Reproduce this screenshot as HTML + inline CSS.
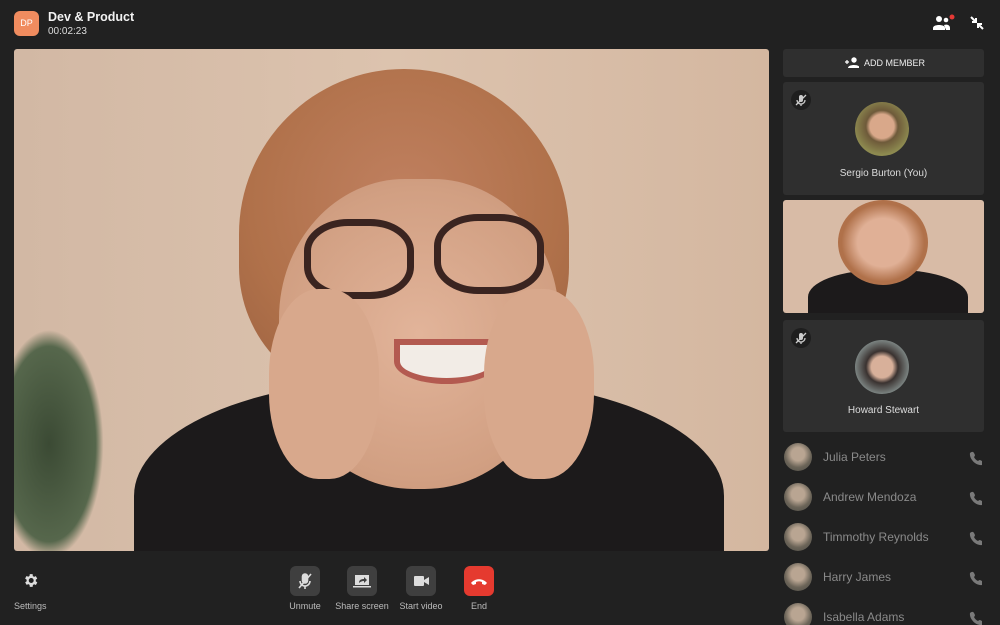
<!DOCTYPE html>
<html><head><style>
*{margin:0;padding:0;box-sizing:border-box}
html,body{width:1000px;height:625px;overflow:hidden}
body{background:#212121;font-family:"Liberation Sans",sans-serif;color:#eee;position:relative}
.abs{position:absolute}
.tile{position:absolute;left:783px;width:201px;background:#2f2f2f;border-radius:3px}
.mic{position:absolute;left:8px;top:8px;width:20px;height:20px;border-radius:50%;background:#1e1e1e}
.name{position:absolute;width:100%;text-align:center;font-size:10px;color:#ddd}
.row{position:absolute;left:784px;width:200px;height:30px}
.row .av{position:absolute;left:0;top:0;width:28px;height:28px;border-radius:50%;background:radial-gradient(circle at 50% 40%,#b9a592 0 30%,#6b6458 60%,#4a4a44)}
.row .t{position:absolute;left:39px;top:7px;font-size:12px;color:#8a8a8a}
.btn{position:absolute;top:566px;width:30px;height:30px;border-radius:6px;background:#3f3f3f}
.lbl{position:absolute;top:601px;font-size:9px;color:#bbb;text-align:center;width:70px}
</style></head><body>
<div class="abs" style="left:14px;top:11px;width:25px;height:25px;border-radius:6px;background:#f08c5f;color:#fff;font-size:9px;text-align:center;line-height:25px">DP</div>
<div class="abs" style="left:48px;top:10px;font-size:12.5px;font-weight:bold;color:#f2f2f2">Dev &amp; Product</div>
<div class="abs" style="left:48px;top:26px;font-size:10px;color:#ddd">00:02:23</div>
<svg class="abs" style="left:932px;top:14px" width="26" height="18" viewBox="0 0 26 18"><circle cx="7" cy="5" r="3" fill="#fff"/><path d="M1 14c0-4 12-4 12 0v2H1z" fill="#fff"/><circle cx="14" cy="6" r="2.3" fill="#fff"/><path d="M12 11c3-1 6 0 6 3v2h-4z" fill="#fff"/><circle cx="20" cy="3" r="2.5" fill="#e53935"/></svg>
<svg class="abs" style="left:970px;top:16px" width="14" height="14" viewBox="0 0 14 14" stroke="#fff" stroke-width="2" fill="none"><path d="M1 1l5 5M6 2v4H2M13 13l-5-5M8 12V8h4"/></svg>

<div class="abs" style="left:14px;top:49px;width:755px;height:502px;border-radius:3px;overflow:hidden;background:linear-gradient(90deg,#d2b8a4,#dcc3ae 50%,#d4b7a0)">
 <div class="abs" style="left:-20px;top:280px;width:110px;height:230px;border-radius:50%;background:radial-gradient(#3b4a34,#56674c 60%,transparent 70%)"></div>
 <div class="abs" style="left:120px;top:330px;width:590px;height:260px;border-radius:45% 45% 0 0;background:#1c1a1b"></div>
 <div class="abs" style="left:225px;top:20px;width:330px;height:330px;border-radius:50% 50% 40% 40%;background:radial-gradient(circle at 50% 40%,#c08060,#b0714a 60%,#9a6040)"></div>
 <div class="abs" style="left:265px;top:130px;width:280px;height:310px;border-radius:45% 45% 48% 48%;background:radial-gradient(circle at 50% 50%,#e2b49a,#d19f82 70%,#c38f72)"></div>
 <div class="abs" style="left:290px;top:170px;width:110px;height:80px;border:7px solid #3a2420;border-radius:40%"></div>
 <div class="abs" style="left:420px;top:165px;width:110px;height:80px;border:7px solid #3a2420;border-radius:40%"></div>
 <div class="abs" style="left:380px;top:290px;width:105px;height:45px;border-radius:0 0 50% 50%;background:#f2ece6;border:6px solid #b35a50"></div>
 <div class="abs" style="left:255px;top:240px;width:110px;height:190px;border-radius:45%;background:#d8a88c"></div>
 <div class="abs" style="left:470px;top:240px;width:110px;height:190px;border-radius:45%;background:#d8a88c"></div>
</div>

<svg width="0" height="0" style="position:absolute"><defs><g id="m"><rect x="8" y="5" width="4" height="7" rx="2" fill="#ccc"/><path d="M6 10a4 4 0 008 0M10 14v2M5 15L15 5" stroke="#ccc" stroke-width="1.3" fill="none"/></g></defs></svg>

<div class="tile" style="top:49px;height:28px"><svg class="abs" style="left:62px;top:8px" width="14" height="11" viewBox="0 0 14 11" fill="#fff"><circle cx="9" cy="3" r="2.7"/><path d="M3 11c0-4 12-4 12 0z"/><path d="M0 5h4M2 3v4" stroke="#fff" stroke-width="1.2"/></svg><div class="abs" style="left:81px;top:9px;font-size:9px;color:#eee">ADD MEMBER</div></div>
<div class="tile" style="top:82px;height:113px"><div class="mic"><svg width="20" height="20"><use href="#m"/></svg></div><div class="abs" style="left:72px;top:20px;width:54px;height:54px;border-radius:50%;background:radial-gradient(circle at 50% 45%,#d9a88a 0 30%,#6e5a3a 40%,#8d8a50 70%)"></div><div class="name" style="top:86px">Sergio Burton (You)</div></div>
<div class="tile" style="top:200px;height:113px;overflow:hidden;background:#d8bba6"><div class="abs" style="left:25px;top:70px;width:160px;height:60px;border-radius:45% 45% 0 0;background:#1c1a1b"></div><div class="abs" style="left:55px;top:0;width:90px;height:85px;border-radius:50%;background:radial-gradient(#e0b096 40%,#b0714a 65%)"></div></div>
<div class="tile" style="top:320px;height:112px"><div class="mic"><svg width="20" height="20"><use href="#m"/></svg></div><div class="abs" style="left:72px;top:20px;width:54px;height:54px;border-radius:50%;background:radial-gradient(circle at 50% 50%,#d8b09a 0 28%,#3a3230 42%,#7a8280 70%)"></div><div class="name" style="top:85px">Howard Stewart</div></div>

<div class="row" style="top:443px"><div class="av"></div><div class="t">Julia Peters</div></div>
<div class="row" style="top:483px"><div class="av"></div><div class="t">Andrew Mendoza</div></div>
<div class="row" style="top:523px"><div class="av"></div><div class="t">Timmothy Reynolds</div></div>
<div class="row" style="top:563px"><div class="av"></div><div class="t">Harry James</div></div>
<div class="row" style="top:603px"><div class="av"></div><div class="t">Isabella Adams</div></div>
<svg class="abs" style="left:968px;top:450px" width="14" height="180" viewBox="0 0 14 180" fill="#7a7a7a"><g id="p"><path d="M2 3c1-1 3-2 4 0l1 2c0 1-1 2-1 2 1 2 2 3 4 4 0 0 1-1 2-1l2 1c2 1 1 3 0 4-6 1-13-6-12-12z"/></g><use href="#p" y="40"/><use href="#p" y="80"/><use href="#p" y="120"/><use href="#p" y="160"/></svg>

<svg class="abs" style="left:22px;top:572px" width="17" height="17" viewBox="0 0 24 24" fill="#ddd"><path d="M19.4 13a7.5 7.5 0 000-2l2.1-1.6-2-3.5-2.5 1a7 7 0 00-1.7-1L15 3h-4l-.4 2.7a7 7 0 00-1.7 1l-2.5-1-2 3.5L6.6 11a7.5 7.5 0 000 2l-2.1 1.6 2 3.5 2.5-1a7 7 0 001.7 1L11 21h4l.4-2.7a7 7 0 001.7-1l2.5 1 2-3.5zM13 15.5a3.5 3.5 0 110-7 3.5 3.5 0 010 7z"/></svg>
<div class="abs" style="left:14px;top:601px;font-size:9px;color:#bbb">Settings</div>
<div class="btn" style="left:290px"><svg width="30" height="30" viewBox="0 0 30 30" fill="none" stroke="#ddd" stroke-width="1.6"><rect x="12.5" y="8" width="5" height="9" rx="2.5" fill="#ddd"/><path d="M10 15a5 5 0 0010 0M15 20v3M9 22l12-14"/></svg></div>
<div class="btn" style="left:347px"><svg width="30" height="30" viewBox="0 0 30 30"><rect x="8" y="9" width="14" height="10" fill="#ddd"/><path d="M6 20h18v1.5H6z" fill="#ddd"/><path d="M12 17c0-3 2-4 5-4v-2l3 3-3 3v-2c-2 0-4 1-5 2z" fill="#3f3f3f"/></svg></div>
<div class="btn" style="left:406px"><svg width="30" height="30" viewBox="0 0 30 30" fill="#ddd"><rect x="8" y="10" width="10" height="10" rx="1"/><path d="M18 14l5-3v8l-5-3z"/></svg></div>
<div class="btn" style="left:464px;background:#e53a2f"><svg width="30" height="30" viewBox="0 0 30 30" fill="#fff"><path d="M7 17c4-5 12-5 16 0l-2 2-3-1v-2c-2-1-4-1-6 0v2l-3 1z"/></svg></div>
<div class="lbl" style="left:270px">Unmute</div>
<div class="lbl" style="left:327px">Share screen</div>
<div class="lbl" style="left:386px">Start video</div>
<div class="lbl" style="left:444px">End</div>
</body></html>
